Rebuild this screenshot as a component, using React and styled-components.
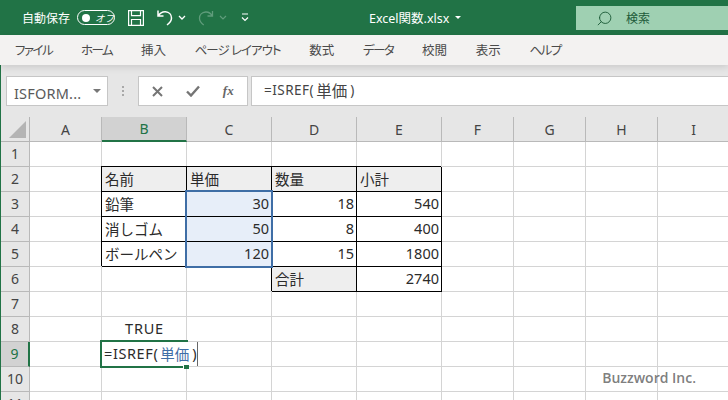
import React from 'react';
import styled, { createGlobalStyle } from 'styled-components';
import { Search } from 'lucide-react';

const GlobalStyle = createGlobalStyle`
  html, body {
    margin: 0;
    padding: 0;
    background: #fff;
    font-family: "Noto Sans", "Noto Sans CJK JP", sans-serif;
  }
`;

const Page = styled.div`
  width: 728px;
  height: 400px;
  overflow: hidden;
  display: flex;
  flex-direction: column;
`;

const TitleBar = styled.div`
  height: 35px;
  flex: none;
  background: #217346;
  color: #fff;
  display: flex;
  align-items: center;
`;

const QuickAccess = styled.div`
  flex: 0 0 369px;
  box-sizing: border-box;
  padding-left: 22px;
  display: flex;
  align-items: center;
  font-size: 12px;
`;

const Toggle = styled.div`
  width: 38px;
  height: 15px;
  margin-left: 7px;
  box-sizing: border-box;
  border: 1px solid #fff;
  border-radius: 8px;
  display: flex;
  align-items: center;
  padding-left: 4px;
  font-size: 9.5px;
  font-style: italic;
`;

const ToggleDot = styled.span`
  width: 8px;
  height: 8px;
  margin-right: 5px;
  border-radius: 50%;
  background: #fff;
`;

const Tool = styled.svg`
  flex: none;
  margin-left: ${(p) => p.$gap}px;
  fill: none;
  stroke: ${(p) => (p.$dim ? '#5f9c7b' : '#fff')};
  stroke-width: ${(p) => p.$weight || 1.2};
`;

const FileName = styled.div`
  flex: 1;
  font-size: 12.5px;
  padding-bottom: 1px;
  display: flex;
  align-items: center;
  gap: 6px;
`;

const Caret = styled.span`
  width: 0;
  height: 0;
  border-left: ${(p) => p.$size}px solid transparent;
  border-right: ${(p) => p.$size}px solid transparent;
  border-top: ${(p) => p.$size}px solid ${(p) => p.$color};
`;

const SearchBox = styled.div`
  width: 152px;
  height: 24px;
  margin-top: 1px;
  background: #9fd0b2;
  color: #1d5b39;
  font-size: 12px;
  display: flex;
  align-items: center;
  gap: 13px;
  padding-left: 20px;
  box-sizing: border-box;
`;

const Ribbon = styled.div`
  height: 30px;
  flex: none;
  position: relative;
  z-index: 2;
  background: #f3f2f1;
  box-shadow: 0 2px 7px rgba(0, 0, 0, 0.13);
  display: flex;
  align-items: center;
  gap: 28.7px;
  padding: 0 0 2px 15px;
  box-sizing: border-box;
  font-size: 12.5px;
  font-feature-settings: "palt";
  color: #4a4a4a;
`;

const Tab = styled.span`
  letter-spacing: ${(p) => p.$tight || 0}px;
`;

const Workspace = styled.div`
  flex: 1;
  min-height: 0;
  border-left: 1px solid #217346;
  display: flex;
  flex-direction: column;
`;

const FormulaBar = styled.div`
  height: 52px;
  flex: none;
  box-sizing: border-box;
  padding: 11px 0 11px 5px;
  background: #e6e6e6;
  display: flex;
  color: #444;
`;

const FieldBox = styled.div`
  box-sizing: border-box;
  height: 30px;
  background: #fff;
  border: 1px solid #c6c6c6;
  display: flex;
  align-items: center;
`;

const NameBox = styled(FieldBox)`
  width: 102px;
  justify-content: space-between;
  padding: 0 6px 0 7px;
  font-size: 14.5px;
  letter-spacing: 0.2px;
  color: #5a5a5a;
`;

const NameText = styled.span`
  padding-top: 3px;
`;

const Grip = styled.div`
  width: 30px;
  flex: none;
  display: flex;
  flex-direction: column;
  align-items: center;
  justify-content: center;
  gap: 2px;
`;

const GripDot = styled.span`
  width: 2px;
  height: 2px;
  background: #a8a8a8;
`;

const ButtonBox = styled(FieldBox)`
  width: 110px;
  justify-content: space-around;
  padding: 0 2px;
  margin-right: 3px;
  color: #6b6b6b;
`;

const FxLabel = styled.span`
  font-family: "Liberation Serif", serif;
  font-style: italic;
  font-weight: 700;
  font-size: 13px;
  color: #666;
`;

const BarIcon = styled.svg`
  fill: none;
  stroke: #757575;
  stroke-width: 2;
`;

const FormulaInput = styled(FieldBox)`
  flex: 1;
  border-right: none;
  padding: 0 0 2px 12px;
  font-size: 13.5px;
  letter-spacing: 0.5px;
  color: #444;
`;

const FormulaRef = styled.span`
  font-size: 15.5px;
  letter-spacing: 0;
  margin: 0 3px 0 2px;
`;

const Sheet = styled.div`
  flex: 1;
  min-height: 0;
  overflow: hidden;
  position: relative;
  display: grid;
  grid-template-columns: 29px 72px 85px 85px 85px 85px 72px 72px 72px 72px;
  grid-auto-rows: 25px;
  background: #fff;
`;

const Corner = styled.div`
  grid-column: 1;
  grid-row: 1;
  background: #e6e6e6;
  border-right: 1px solid #b4b4b4;
  border-bottom: 1px solid #b4b4b4;
  display: flex;
  align-items: flex-end;
  justify-content: flex-end;
  padding: 0 3px 3px 0;
`;

const HeaderCell = styled.div`
  grid-column: ${(p) => p.$col};
  grid-row: ${(p) => p.$row};
  box-sizing: border-box;
  background: ${(p) => (p.$active ? '#d2d2d2' : '#e6e6e6')};
  color: ${(p) => (p.$active ? '#217346' : '#444')};
  border-right: 1px solid #b9b9b9;
  border-bottom: 1px solid #b9b9b9;
  padding-bottom: 2px;
  display: flex;
  align-items: center;
  justify-content: center;
  font-size: 14px;
`;

const ColHeader = styled(HeaderCell)`
  padding-bottom: 0;
  ${(p) => p.$active && 'border-bottom: 2px solid #217346;'}
`;

const RowHeader = styled(HeaderCell)`
  ${(p) => p.$active && 'border-right: 2px solid #217346;'}
`;

const Cell = styled.div`
  grid-column: ${(p) => p.$col};
  grid-row: ${(p) => p.$row};
  box-sizing: border-box;
  min-width: 0;
  background: ${(p) => p.$fill || '#fff'};
  border-right: 1px solid ${(p) => (p.$boxed ? '#000' : '#d4d4d4')};
  border-bottom: 1px solid ${(p) => (p.$boxed ? '#000' : '#d4d4d4')};
  box-shadow: ${(p) => (p.$boxed ? '-1px -1px 0 0 #000' : 'none')};
  display: flex;
  align-items: center;
  justify-content: ${(p) => p.$align || 'flex-start'};
  padding: 0 2px 2px 3px;
  font-size: 14.5px;
  letter-spacing: ${(p) => p.$spacing || 0}px;
  color: #2b2b2b;
  white-space: nowrap;
`;

const RangeOutline = styled.div`
  grid-column: 4;
  grid-row: 4 / span 3;
  margin: -2px -1px -1px -2px;
  border: 2px solid #3f6ea6;
  position: relative;
  z-index: 3;
  pointer-events: none;
`;

const ActiveCell = styled.div`
  grid-column: 3;
  grid-row: 10;
  margin: -2px -1px -1px -2px;
  border: 2px solid #217346;
  position: relative;
  z-index: 3;
  display: flex;
`;

const EditBox = styled.div`
  flex: none;
  height: 100%;
  padding: 0 0 2px 2px;
  box-sizing: border-box;
  background: #fff;
  border-right: 1px solid #666;
  display: flex;
  align-items: center;
  font-size: 14.5px;
  letter-spacing: 0.6px;
  color: #2b2b2b;
  white-space: nowrap;
`;

const RangeRef = styled.span`
  color: #3f6ea6;
  letter-spacing: 0;
  margin: 0 3px 0 2px;
`;

const FillHandle = styled.span`
  position: absolute;
  right: -3px;
  bottom: -3px;
  width: 5px;
  height: 4px;
  background: #217346;
  border-left: 1px solid #fff;
  border-top: 1px solid #fff;
`;

const Watermark = styled.div`
  position: absolute;
  right: 32px;
  bottom: 13px;
  z-index: 4;
  font-family: "Open Sans", sans-serif;
  font-weight: 600;
  font-size: 14px;
  color: rgba(110, 110, 110, 0.9);
`;

const tabs = [
  { label: 'ファイル', tight: -1.5 },
  { label: 'ホーム', tight: -1.5 },
  { label: '挿入' },
  { label: 'ページ レイアウト', tight: -1 },
  { label: '数式' },
  { label: 'データ', tight: -1.5 },
  { label: '校閲' },
  { label: '表示' },
  { label: 'ヘルプ', tight: -1.5 },
];
const columns = ['A', 'B', 'C', 'D', 'E', 'F', 'G', 'H', 'I'];
const rows = [1, 2, 3, 4, 5, 6, 7, 8, 9, 10, 11];

const HEAD_FILL = '#eeeeee';
const RANGE_FILL = '#e7eef9';

const table = {
  B2: { text: '名前', fill: HEAD_FILL },
  C2: { text: '単価', fill: HEAD_FILL },
  D2: { text: '数量', fill: HEAD_FILL },
  E2: { text: '小計', fill: HEAD_FILL },
  B3: { text: '鉛筆' },
  C3: { text: 30, fill: RANGE_FILL },
  D3: { text: 18 },
  E3: { text: 540 },
  B4: { text: '消しゴム' },
  C4: { text: 50, fill: RANGE_FILL },
  D4: { text: 8 },
  E4: { text: 400 },
  B5: { text: 'ボールペン' },
  C5: { text: 120, fill: RANGE_FILL },
  D5: { text: 15 },
  E5: { text: 1800 },
  D6: { text: '合計', fill: HEAD_FILL },
  E6: { text: 2740 },
};

const App = () => (
  <Page>
    <GlobalStyle />
    <TitleBar>
      <QuickAccess>
        自動保存
        <Toggle>
          <ToggleDot />
          オフ
        </Toggle>
        <Tool $gap={13} width="16" height="16" viewBox="0 0 16 16">
          <path d="M.6.6h14.8v14.8H.6zM3.5.6v5h9v-5M3.5 15.4V9.5h9v5.9" />
        </Tool>
        <Tool $gap={12} $weight={1.5} width="18" height="18" viewBox="0 0 18 18">
          <path d="M2 1.5v5.5h5.5M2.2 7C4 4 6.5 2.6 9.5 2.8c3.6.3 6 3 6 6.2 0 2.8-2 5.2-4.5 7" />
        </Tool>
        <Tool $gap={4} $weight={1.3} width="8" height="6" viewBox="0 0 8 6">
          <path d="M1 1l3 3 3-3" />
        </Tool>
        <Tool $gap={12} $dim $weight={1.3} width="16" height="18" viewBox="0 0 16 18">
          <path d="M14.5 2v5h-5M14.3 7C12.8 4.3 10.4 2.8 7.6 3 4 3.3 1.5 6 1.5 9.2c0 2.8 1.8 5 4.2 6.8" />
        </Tool>
        <Tool $gap={5} $dim width="8" height="6" viewBox="0 0 8 6">
          <path d="M1 1l3 3 3-3" />
        </Tool>
        <Tool $gap={14} width="8" height="9" viewBox="0 0 8 9">
          <path d="M1 1h6M1 4.5l3 3 3-3" />
        </Tool>
      </QuickAccess>
      <FileName>
        Excel関数.xlsx
        <Caret $size={3} $color="#fff" />
      </FileName>
      <SearchBox>
        <Search size={17} strokeWidth={1.3} style={{ transform: 'scaleX(-1)' }} />
        検索
      </SearchBox>
    </TitleBar>

    <Ribbon>
      {tabs.map((tab) => (
        <Tab key={tab.label} $tight={tab.tight}>
          {tab.label}
        </Tab>
      ))}
    </Ribbon>

    <Workspace>
      <FormulaBar>
        <NameBox>
          <NameText>ISFORM...</NameText>
          <Caret $size={4} $color="#777" />
        </NameBox>
        <Grip>
          <GripDot />
          <GripDot />
          <GripDot />
        </Grip>
        <ButtonBox>
          <BarIcon width="11" height="11" viewBox="0 0 11 11">
            <path d="M1 1l9 9M10 1l-9 9" />
          </BarIcon>
          <BarIcon width="14" height="12" viewBox="0 0 14 12">
            <path d="M1 6.5l4 4 8-9" strokeWidth="2.4" />
          </BarIcon>
          <FxLabel>fx</FxLabel>
        </ButtonBox>
        <FormulaInput>
          =ISREF(<FormulaRef>単価</FormulaRef>)
        </FormulaInput>
      </FormulaBar>

      <Sheet>
        <Corner>
          <svg width="17" height="17" viewBox="0 0 17 17">
            <path d="M17 0v17H0z" fill="#b4b4b4" />
          </svg>
        </Corner>
        {columns.map((col, i) => (
          <ColHeader key={col} $col={i + 2} $row={1} $active={col === 'B'}>
            {col}
          </ColHeader>
        ))}
        {rows.map((row) => (
          <React.Fragment key={row}>
            <RowHeader $col={1} $row={row + 1} $active={row === 9}>
              {row}
            </RowHeader>
            {columns.map((col, i) => {
              const cell = table[col + row];
              const isResult = col + row === 'B8';
              return (
                <Cell
                  key={col}
                  $col={i + 2}
                  $row={row + 1}
                  $boxed={Boolean(cell)}
                  $fill={cell && cell.fill}
                  $spacing={isResult ? 0.8 : 0}
                  $align={
                    cell && typeof cell.text === 'number'
                      ? 'flex-end'
                      : isResult
                        ? 'center'
                        : undefined
                  }
                >
                  {isResult ? 'TRUE' : cell && cell.text}
                </Cell>
              );
            })}
          </React.Fragment>
        ))}
        <RangeOutline />
        <ActiveCell>
          <EditBox>
            =ISREF(<RangeRef>単価</RangeRef>)
          </EditBox>
          <FillHandle />
        </ActiveCell>
        <Watermark>Buzzword Inc.</Watermark>
      </Sheet>
    </Workspace>
  </Page>
);

export default App;
